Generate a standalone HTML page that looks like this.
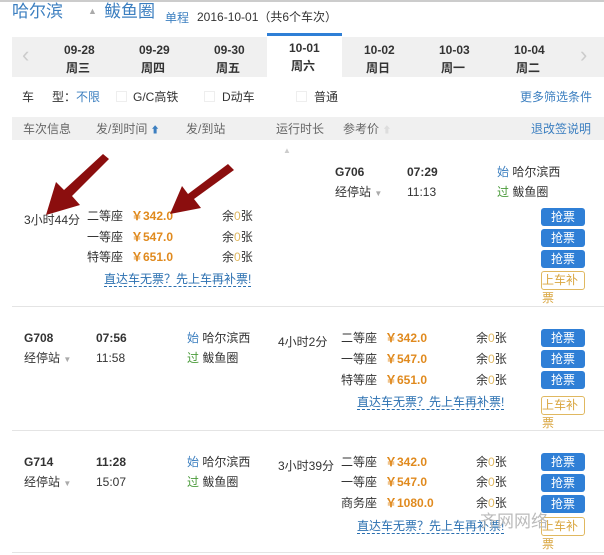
<!DOCTYPE html>
<html><head><meta charset="utf-8"><style>
body{margin:0;width:604px;height:555px;background:#fff;position:relative;overflow:hidden;font-family:"Liberation Sans","Noto Sans CJK SC",sans-serif;font-size:12px;color:#333}
.a{position:absolute;white-space:nowrap;line-height:14px}
.b{font-weight:bold;color:#333}
.p{color:#e08a1e;font-weight:bold}
.btn{position:absolute;left:541px;width:44px;height:18px;background:#2f7fd6;color:#fff;border-radius:3px;text-align:center;line-height:18px;font-size:12px}
.bk{position:absolute;left:541px;width:42px;height:17px;border:1px solid #e0b860;border-radius:3px;color:#d9a640;font-size:12px;line-height:17px}
.lk{color:#2a6fb0;border-bottom:1px dashed #2a6fb0;line-height:13px}
.sep{position:absolute;left:12px;right:0;height:1px;background:#e4e4e4}
.g{color:#4a9a3a}.bl{color:#3c7fc0}
</style></head><body>
<div style="position:absolute;left:0;top:0;width:604px;height:2px;background:#ccc"></div>
<div class="a bl" style="left:12px;top:2px;font-size:17px;line-height:20px">哈尔滨</div>
<div class="a" style="left:88px;top:4px;color:#aaa;font-size:9px">▲</div>
<div class="a bl" style="left:104px;top:2px;font-size:17px;line-height:20px">鲅鱼圈</div>
<div class="a bl" style="left:165px;top:11px">单程</div>
<div class="a" style="left:197px;top:10px">2016-10-01（共6个车次）</div>
<div style="position:absolute;left:12px;top:37px;width:592px;height:40px;background:#f0f0f0"></div>
<div style="position:absolute;left:267px;top:33px;width:75px;height:44px;background:#fff;border-top:3px solid #2f7fd6;box-sizing:border-box"></div>
<div class="a" style="left:22px;top:44px;color:#ccc;font-size:22px;line-height:22px">‹</div>
<div class="a" style="left:580px;top:44px;color:#ccc;font-size:22px;line-height:22px">›</div>
<div class="a b" style="left:64px;top:43px">09-28</div><div class="a b" style="left:66px;top:61px">周三</div>
<div class="a b" style="left:139px;top:43px">09-29</div><div class="a b" style="left:141px;top:61px">周四</div>
<div class="a b" style="left:214px;top:43px">09-30</div><div class="a b" style="left:216px;top:61px">周五</div>
<div class="a b" style="left:289px;top:41px">10-01</div><div class="a b" style="left:291px;top:59px">周六</div>
<div class="a b" style="left:364px;top:43px">10-02</div><div class="a b" style="left:366px;top:61px">周日</div>
<div class="a b" style="left:439px;top:43px">10-03</div><div class="a b" style="left:441px;top:61px">周一</div>
<div class="a b" style="left:514px;top:43px">10-04</div><div class="a b" style="left:516px;top:61px">周二</div>
<div class="a" style="left:22px;top:90px">车</div>
<div class="a" style="left:52px;top:90px">型：<span class="bl">不限</span></div>
<div style="position:absolute;left:116px;top:91px;width:9px;height:9px;border:1px solid #eee"></div>
<div class="a" style="left:133px;top:90px">G/C高铁</div>
<div style="position:absolute;left:204px;top:91px;width:9px;height:9px;border:1px solid #eee"></div>
<div class="a" style="left:222px;top:90px">D动车</div>
<div style="position:absolute;left:296px;top:91px;width:9px;height:9px;border:1px solid #eee"></div>
<div class="a" style="left:314px;top:90px">普通</div>
<div class="a bl" style="left:520px;top:90px">更多筛选条件</div>
<div style="position:absolute;left:12px;top:117px;width:592px;height:23px;background:#f0f0f0"></div>
<div class="a" style="left:23px;top:122px;color:#666">车次信息</div>
<div class="a" style="left:96px;top:122px;color:#666">发/到时间 <span class="bl" style="font-size:9px">⬆</span></div>
<div class="a" style="left:186px;top:122px;color:#666">发/到站</div>
<div class="a" style="left:276px;top:122px;color:#666">运行时长</div>
<div class="a" style="left:343px;top:122px;color:#666">参考价 <span style="color:#ddd;font-size:9px">⬆</span></div>
<div class="a bl" style="left:531px;top:122px">退改签说明</div>
<div class="a" style="left:283px;top:144px;color:#ccc;font-size:8px">▲</div>

<div class="a b" style="left:335px;top:165px">G706</div><div class="a b" style="left:407px;top:165px">07:29</div><div class="a" style="left:497px;top:165px"><span class="bl">始</span> 哈尔滨西</div>
<div class="a" style="left:335px;top:185px">经停站 <span style="color:#aaa;font-size:8px">▼</span></div><div class="a" style="left:407px;top:185px">11:13</div><div class="a" style="left:497px;top:185px"><span class="g">过</span> 鲅鱼圈</div>
<div class="a" style="left:24px;top:213px">3小时44分</div>
<div class="a" style="left:87px;top:209px">二等座</div><div class="a p" style="left:131px;top:209px">￥342.0</div><div class="a" style="left:222px;top:209px">余<span style="color:#e0b860">0</span>张</div>
<div class="a" style="left:87px;top:230px">一等座</div><div class="a p" style="left:131px;top:230px">￥547.0</div><div class="a" style="left:222px;top:230px">余<span style="color:#e0b860">0</span>张</div>
<div class="a" style="left:87px;top:250px">特等座</div><div class="a p" style="left:131px;top:250px">￥651.0</div><div class="a" style="left:222px;top:250px">余<span style="color:#e0b860">0</span>张</div>
<div class="a lk" style="left:104px;top:273px">直达车无票？先上车再补票!</div>
<div class="btn" style="top:208px">抢票</div><div class="btn" style="top:229px">抢票</div><div class="btn" style="top:250px">抢票</div>
<div class="bk" style="top:271px">上车补</div><div class="a" style="left:542px;top:291px;color:#d9a640">票</div>
<div class="sep" style="top:306px"></div>

<div class="a b" style="left:24px;top:331px">G708</div><div class="a b" style="left:96px;top:331px">07:56</div><div class="a" style="left:187px;top:331px"><span class="bl">始</span> 哈尔滨西</div>
<div class="a" style="left:24px;top:351px">经停站 <span style="color:#aaa;font-size:8px">▼</span></div><div class="a" style="left:96px;top:351px">11:58</div><div class="a" style="left:187px;top:351px"><span class="g">过</span> 鲅鱼圈</div>
<div class="a" style="left:278px;top:335px">4小时2分</div>
<div class="a" style="left:341px;top:331px">二等座</div><div class="a p" style="left:385px;top:331px">￥342.0</div><div class="a" style="left:476px;top:331px">余<span style="color:#e0b860">0</span>张</div>
<div class="a" style="left:341px;top:352px">一等座</div><div class="a p" style="left:385px;top:352px">￥547.0</div><div class="a" style="left:476px;top:352px">余<span style="color:#e0b860">0</span>张</div>
<div class="a" style="left:341px;top:373px">特等座</div><div class="a p" style="left:385px;top:373px">￥651.0</div><div class="a" style="left:476px;top:373px">余<span style="color:#e0b860">0</span>张</div>
<div class="a lk" style="left:357px;top:396px">直达车无票？先上车再补票!</div>
<div class="btn" style="top:329px">抢票</div><div class="btn" style="top:350px">抢票</div><div class="btn" style="top:371px">抢票</div>
<div class="bk" style="top:396px">上车补</div><div class="a" style="left:542px;top:416px;color:#d9a640">票</div>
<div class="sep" style="top:430px"></div>

<div class="a b" style="left:24px;top:455px">G714</div><div class="a b" style="left:96px;top:455px">11:28</div><div class="a" style="left:187px;top:455px"><span class="bl">始</span> 哈尔滨西</div>
<div class="a" style="left:24px;top:475px">经停站 <span style="color:#aaa;font-size:8px">▼</span></div><div class="a" style="left:96px;top:475px">15:07</div><div class="a" style="left:187px;top:475px"><span class="g">过</span> 鲅鱼圈</div>
<div class="a" style="left:278px;top:459px">3小时39分</div>
<div class="a" style="left:341px;top:455px">二等座</div><div class="a p" style="left:385px;top:455px">￥342.0</div><div class="a" style="left:476px;top:455px">余<span style="color:#e0b860">0</span>张</div>
<div class="a" style="left:341px;top:475px">一等座</div><div class="a p" style="left:385px;top:475px">￥547.0</div><div class="a" style="left:476px;top:475px">余<span style="color:#e0b860">0</span>张</div>
<div class="a" style="left:341px;top:496px">商务座</div><div class="a p" style="left:385px;top:496px">￥1080.0</div><div class="a" style="left:476px;top:496px">余<span style="color:#e0b860">0</span>张</div>
<div class="a lk" style="left:357px;top:520px">直达车无票？先上车再补票!</div>
<div class="btn" style="top:453px">抢票</div><div class="btn" style="top:474px">抢票</div><div class="btn" style="top:495px">抢票</div>
<div class="bk" style="top:517px">上车补</div><div class="a" style="left:542px;top:537px;color:#d9a640">票</div>
<div class="a" style="left:480px;top:512px;color:#bbb;font-size:17px;line-height:20px">齐网网络</div>
<div class="sep" style="top:552px"></div>

<svg style="position:absolute;left:0;top:0" width="604" height="555">
<g fill="#8b0e0e">
<path d="M103,154 L109,159 L72,196 L80,205 L46,215 L56,182 L64,190 Z"/>
<path d="M228,164 L234,170 L194,199 L201,208 L170,214 L182,186 L188,194 Z"/>
</g></svg>
</body></html>
